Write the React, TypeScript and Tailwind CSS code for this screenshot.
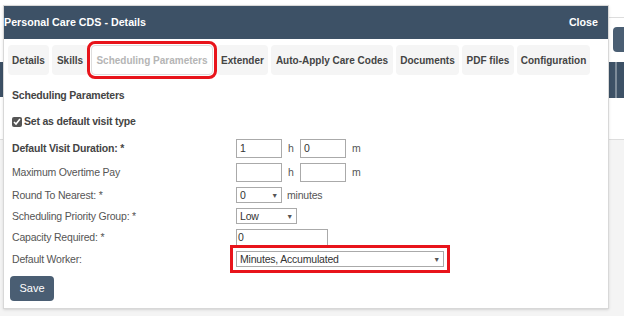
import React from 'react';

const tabs = [
  { label: 'Details', w: 'w-[41px]' },
  { label: 'Skills', w: 'w-[36px]' },
  { label: 'Scheduling Parameters', w: 'w-[122px] mr-[1px]', active: true },
  { label: 'Extender', w: 'w-[51px]' },
  { label: 'Auto-Apply Care Codes', w: 'w-[122px]' },
  { label: 'Documents', w: 'w-[63px]' },
  { label: 'PDF files', w: 'w-[52px]' },
  { label: 'Configuration', w: 'w-[73px]' },
];

const Caret = () => <span className="text-[7px] text-[#555]">▼</span>;

const App: React.FC = () => {
  return (
    <div className="relative w-[624px] h-[316px] overflow-hidden bg-[#f4f4f4] text-[10.5px] leading-[17px] tracking-[-0.2px] text-[#555] font-['Liberation_Sans',Arial,sans-serif]">
      {/* page behind the modal */}
      <div className="h-[140px] bg-white border-b border-[#ddd]" />
      <div className="absolute right-0 top-[17px] w-[15px] h-px bg-[#ddd]" />
      <div className="absolute right-0 top-[27px] w-[11px] h-[25px] rounded-l bg-[#4a5e73]" />
      <div className="absolute right-0 top-[62px] w-[15px] h-[36px] bg-[#3d5166] flex">
        <div className="w-[2px] ml-[6px] bg-[#7d8b99]" />
      </div>
      <div className="absolute left-0 top-[62px] w-[3px] h-[35px] bg-[#3d5166]" />

      {/* modal */}
      <div className="absolute left-[3px] top-[5px] w-[606px] h-[304px] bg-white border border-[#d8d8d8] shadow-sm">
        <div className="h-[33px] bg-[#3d5166] flex items-center justify-between pl-[0px] pr-[10px] text-white font-bold text-[10.7px] tracking-normal">
          <span>Personal Care CDS - Details</span>
          <span>Close</span>
        </div>

        <div className="flex gap-[3px] pl-[4px] pt-[6px] text-[10px] tracking-normal">
          {tabs.map((t) => (
            <div
              key={t.label}
              className={`${t.w} h-[30px] flex items-center justify-center whitespace-nowrap rounded-sm font-bold ${
                t.active ? 'bg-white text-[#b5b5b5] outline outline-[3px] outline-[#e8141b] outline-offset-[1px] border border-[#ddd]' : 'bg-[#f5f5f5] text-[#444]'
              }`}
            >
              {t.label}
            </div>
          ))}
        </div>

        <div className="pl-[8px] pt-[12px]">
          <div className="font-bold text-[#444]">Scheduling Parameters</div>
          <label className="flex items-center gap-[2px] mt-[9px] font-bold text-[#444]">
            <input type="checkbox" defaultChecked className="w-[10px] h-[10px] m-0 accent-[#555]" />
            <span>Set as default visit type</span>
          </label>

          <div className="mt-[6px] flex flex-col">
            <div className="flex items-center h-[24px]">
              <span className="w-[224px] font-bold text-[#444]">Default Visit Duration: *</span>
              <div className="w-[46px] h-[19px] border border-[#aaa] px-[3px] leading-[17px] text-[#333]">1</div>
              <span className="ml-[6px] w-[12px]">h</span>
              <div className="w-[46px] h-[19px] border border-[#aaa] px-[3px] leading-[17px] text-[#333]">0</div>
              <span className="ml-[6px]">m</span>
            </div>
            <div className="flex items-center h-[24px]">
              <span className="w-[224px]">Maximum Overtime Pay</span>
              <div className="w-[46px] h-[19px] border border-[#aaa]" />
              <span className="ml-[6px] w-[12px]">h</span>
              <div className="w-[46px] h-[19px] border border-[#aaa]" />
              <span className="ml-[6px]">m</span>
            </div>
            <div className="flex items-center h-[22px]">
              <span className="w-[224px]">Round To Nearest: *</span>
              <div className="w-[46px] h-[16px] border border-[#aaa] flex items-center justify-between px-[3px] text-[#333]">
                <span>0</span>
                <Caret />
              </div>
              <span className="ml-[5px]">minutes</span>
            </div>
            <div className="flex items-center h-[20px]">
              <span className="w-[224px]">Scheduling Priority Group: *</span>
              <div className="w-[61px] h-[16px] border border-[#aaa] flex items-center justify-between px-[3px] text-[#333]">
                <span>Low</span>
                <Caret />
              </div>
            </div>
            <div className="flex items-center h-[22px]">
              <span className="w-[224px]">Capacity Required: *</span>
              <div className="w-[92px] h-[17px] border border-[#aaa] px-[1px] leading-[15px] text-[#333]">0</div>
            </div>
            <div className="flex items-center h-[22px]">
              <span className="w-[224px]">Default Worker:</span>
              <div className="outline outline-[3px] outline-[#e8141b] outline-offset-[3px]">
                <div className="w-[208px] h-[16px] border border-[#aaa] flex items-center justify-between px-[3px] text-[#333]">
                  <span>Minutes, Accumulated</span>
                  <Caret />
                </div>
              </div>
            </div>
          </div>

          <button className="mt-[6px] -ml-[2px] w-[44px] h-[25px] rounded bg-[#4a5e73] text-white text-[11px] tracking-normal">Save</button>
        </div>
      </div>
    </div>
  );
};

export default App;
